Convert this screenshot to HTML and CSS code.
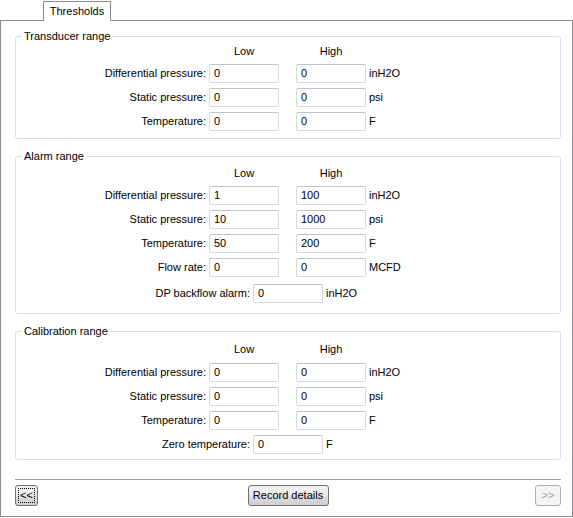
FILE: index.html
```html
<!DOCTYPE html>
<html>
<head>
<meta charset="utf-8">
<link rel="stylesheet" href="styles.css">
</head>
<body>
<div class="window">
  <div class="tabs">
    <div class="tab">Thresholds</div>
  </div>
  <div class="panel">
    <div class="group g1">
      <div class="group-title">Transducer range</div>
      <div class="hdr-row"><div class="hdr">Low</div><div class="hdr">High</div></div>
      <div class="rows">
        <div class="row"><div class="lbl">Differential pressure:</div><div class="inp">0</div><div class="inp">0</div><div class="unit">inH2O</div></div>
        <div class="row"><div class="lbl">Static pressure:</div><div class="inp">0</div><div class="inp">0</div><div class="unit">psi</div></div>
        <div class="row"><div class="lbl">Temperature:</div><div class="inp">0</div><div class="inp">0</div><div class="unit">F</div></div>
      </div>
    </div>

    <div class="group g2">
      <div class="group-title">Alarm range</div>
      <div class="hdr-row"><div class="hdr">Low</div><div class="hdr">High</div></div>
      <div class="rows">
        <div class="row"><div class="lbl">Differential pressure:</div><div class="inp">1</div><div class="inp">100</div><div class="unit">inH2O</div></div>
        <div class="row"><div class="lbl">Static pressure:</div><div class="inp">10</div><div class="inp">1000</div><div class="unit">psi</div></div>
        <div class="row"><div class="lbl">Temperature:</div><div class="inp">50</div><div class="inp">200</div><div class="unit">F</div></div>
        <div class="row"><div class="lbl">Flow rate:</div><div class="inp">0</div><div class="inp">0</div><div class="unit">MCFD</div></div>
      </div>
      <div class="single dp">
        <div class="lbl">DP backflow alarm:</div><div class="inp">0</div><div class="unit">inH2O</div>
      </div>
    </div>

    <div class="group g3">
      <div class="group-title">Calibration range</div>
      <div class="hdr-row"><div class="hdr">Low</div><div class="hdr">High</div></div>
      <div class="rows">
        <div class="row"><div class="lbl">Differential pressure:</div><div class="inp">0</div><div class="inp">0</div><div class="unit">inH2O</div></div>
        <div class="row"><div class="lbl">Static pressure:</div><div class="inp">0</div><div class="inp">0</div><div class="unit">psi</div></div>
        <div class="row"><div class="lbl">Temperature:</div><div class="inp">0</div><div class="inp">0</div><div class="unit">F</div></div>
      </div>
      <div class="single zt">
        <div class="lbl">Zero temperature:</div><div class="inp">0</div><div class="unit">F</div>
      </div>
    </div>

    <div class="separator"></div>

    <div class="buttons">
      <div class="btn prev"><span class="focus">&lt;&lt;</span></div>
      <div class="btn record">Record details</div>
      <div class="btn next disabled">&gt;&gt;</div>
    </div>
  </div>
</div>
</body>
</html>
```
FILE: styles.css
```css
html, body {
  margin: 0;
  padding: 0;
  background: #ffffff;
}
body {
  font-family: "Liberation Sans", Arial, sans-serif;
  font-size: 11px;
  color: #000000;
  line-height: 13px;
}
.window {
  width: 573px;
  height: 518px;
  background: #ffffff;
}
.tabs {
  height: 20px;
  padding-left: 43px;
  display: flex;
  align-items: flex-end;
}
.tab {
  position: relative;
  z-index: 1;
  width: 68px;
  height: 20px;
  margin-bottom: -1px;
  border: 1px solid #898c95;
  border-bottom: none;
  background: #ffffff;
  box-sizing: border-box;
  text-align: center;
  line-height: 18px;
}
.panel {
  width: 573px;
  height: 497px;
  box-sizing: border-box;
  border: 1px solid #898c95;
  padding: 15px 11px 0 14px;
}
.group {
  border: 1px solid #d5dfe5;
  border-radius: 3px;
}
.group-title {
  width: fit-content;
  margin: -7px 0 0 6px;
  padding: 0 2px;
  background: #ffffff;
  line-height: 13px;
}
.hdr-row {
  display: flex;
  padding-left: 193px;
  gap: 17px;
  height: 13px;
}
.hdr {
  width: 70px;
  text-align: center;
}
.rows {
  display: flex;
  flex-direction: column;
  gap: 5px;
}
.row, .single {
  display: flex;
  height: 19px;
}
.lbl {
  box-sizing: border-box;
  text-align: right;
  line-height: 19px;
  white-space: nowrap;
  padding-right: 3px;
}
.row .lbl { width: 193px; }
.row .inp + .inp { margin-left: 17px; }
.inp {
  box-sizing: border-box;
  width: 70px;
  height: 19px;
  border: 1px solid #d5d9de;
  border-top-color: #bfc4cb;
  border-radius: 2px;
  padding-left: 4px;
  line-height: 17px;
  background: #ffffff;
}
.unit {
  line-height: 19px;
  padding-left: 3px;
  white-space: nowrap;
}
.single .lbl { width: 237px; }

.g1 .hdr-row { margin-top: 2px; }
.g1 .rows { margin-top: 6px; }
.g1 { padding-bottom: 7px; }

.g2, .g3 { margin-top: 17px; }
.g2 .hdr-row { margin-top: 4px; }
.g2 .rows { margin-top: 6px; }
.g3 .hdr-row { margin-top: 5px; }
.g3 .rows { margin-top: 7px; }
.g2 { padding-bottom: 10px; }
.g3 { padding-bottom: 5px; }

.dp { margin-top: 7px; }
.zt { margin-top: 5px; }

.separator {
  margin-top: 19px;
  height: 1px;
  background: #a0a0a0;
}
.buttons {
  margin-top: 5px;
  display: grid;
  grid-template-columns: 1fr auto 1fr;
  align-items: start;
}
.btn {
  box-sizing: border-box;
  height: 21px;
  border: 1px solid #707070;
  border-radius: 3px;
  background: linear-gradient(to bottom, #f2f2f2 0%, #ebebeb 48%, #dddddd 52%, #cfcfcf 100%);
  text-align: center;
  line-height: 19px;
  white-space: nowrap;
}
.prev {
  width: 23px;
  justify-self: start;
  padding: 2px;
}
.prev .focus {
  display: block;
  height: 15px;
  border: 1px dotted #000000;
  line-height: 13px;
  box-sizing: border-box;
}
.record {
  width: 81px;
  justify-self: center;
}
.next {
  width: 26px;
  justify-self: end;
}
.disabled {
  border-color: #adb2b5;
  background: #f4f4f4;
  color: #a0a0a0;
}
```
